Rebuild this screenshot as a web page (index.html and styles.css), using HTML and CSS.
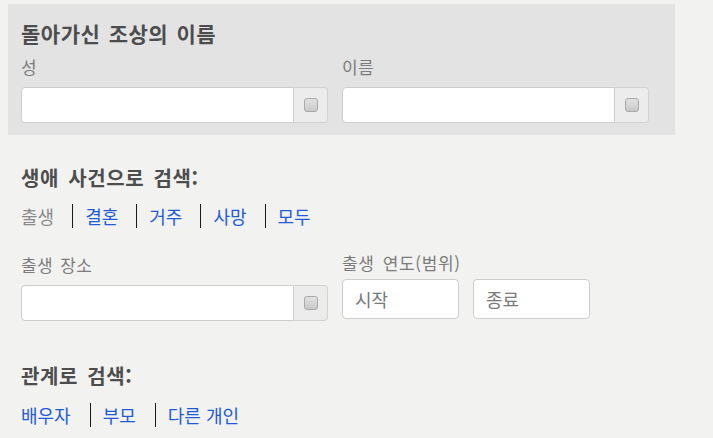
FILE: index.html
```html
<!DOCTYPE html>
<html lang="ko">
<head>
<meta charset="utf-8">
<link rel="stylesheet" href="styles.css">
</head>
<body>
<div class="page">
  <div class="panel">
    <h2 class="heading title">돌아가신 조상의 이름</h2>
    <div class="fields">
      <div class="field">
        <label class="label">성</label>
        <div class="group">
          <div class="input"></div>
          <div class="addon"><span class="check"></span></div>
        </div>
      </div>
      <div class="field">
        <label class="label">이름</label>
        <div class="group">
          <div class="input"></div>
          <div class="addon"><span class="check"></span></div>
        </div>
      </div>
    </div>
  </div>

  <div class="section">
    <h2 class="heading">생애 사건으로 검색:</h2>
    <div class="tabs">
      <span class="tab current">출생</span>
      <span class="tab">결혼</span>
      <span class="tab">거주</span>
      <span class="tab">사망</span>
      <span class="tab">모두</span>
    </div>
    <div class="fields events">
      <div class="field place">
        <label class="label">출생 장소</label>
        <div class="group">
          <div class="input"></div>
          <div class="addon"><span class="check"></span></div>
        </div>
      </div>
      <div class="field years">
        <label class="label wide">출생 연도(범위)</label>
        <div class="range">
          <div class="small-input">시작</div>
          <div class="small-input">종료</div>
        </div>
      </div>
    </div>
  </div>

  <div class="section rel">
    <h2 class="heading">관계로 검색:</h2>
    <div class="tabs">
      <span class="tab">배우자</span>
      <span class="tab">부모</span>
      <span class="tab">다른 개인</span>
    </div>
  </div>
</div>
</body>
</html>
```

FILE: styles.css
```css
html, body {
  margin: 0;
  padding: 0;
  background: #f2f2f1;
}
body {
  font-family: "Noto Sans CJK KR", "Noto Sans", sans-serif;
  color: #4a4a4a;
}
.page {
  width: 667px;
  padding: 4px 0 0 8px;
}
.panel {
  background: #e3e3e3;
  padding: 16px 13px 12px;
}
.heading {
  margin: 0;
  font-size: 20px;
  line-height: 26px;
  font-weight: bold;
  color: #4d4d4d;
  letter-spacing: 0.6px;
  word-spacing: 3px;
}
.heading.title {
  font-size: 21px;
  letter-spacing: 0.5px;
  word-spacing: 2px;
}
.fields {
  display: flex;
  gap: 14px;
}
.label {
  display: block;
  font-size: 17px;
  line-height: 22px;
  color: #7c7c7c;
  margin: 10px 0 9px;
  letter-spacing: 0.4px;
  word-spacing: 2px;
}
.label.wide {
  letter-spacing: 0.6px;
  word-spacing: 3px;
}
.group {
  display: flex;
  width: 307px;
}
.input {
  box-sizing: border-box;
  width: 273px;
  height: 36px;
  background: #fff;
  border: 1px solid #cdcdcd;
  border-radius: 4px 0 0 4px;
}
.addon {
  box-sizing: border-box;
  width: 34px;
  height: 36px;
  background: #ececec;
  border: 1px solid #d2d2d2;
  border-left: none;
  border-radius: 0 4px 4px 0;
  display: flex;
  align-items: center;
  justify-content: center;
}
.check {
  box-sizing: border-box;
  width: 14px;
  height: 14px;
  border: 1px solid #a9a9a9;
  border-radius: 3px;
  background: linear-gradient(#e2e2e2, #c9c9c9);
}
.section {
  padding: 30px 13px 0;
}
.tabs {
  display: flex;
  align-items: center;
  margin-top: 13px;
}
.tab {
  font-size: 18px;
  line-height: 24px;
  color: #1f5bd8;
  padding: 0 18px 0 12px;
  border-left: 1px solid #1a1a1a;
}
.tab:first-child {
  padding-left: 0;
  border-left: none;
}
.tab.current {
  color: #8a8a8a;
}
.events {
  margin-top: 16px;
}
.years .label {
  margin-top: 8px;
  margin-bottom: 5px;
}
.range {
  display: flex;
  gap: 14px;
}
.small-input {
  box-sizing: border-box;
  width: 117px;
  height: 40px;
  background: #fff;
  border: 1px solid #cdcdcd;
  border-radius: 4px;
  font-size: 18px;
  line-height: 38px;
  color: #7a7a7a;
  padding-left: 12px;
}
.rel {
  padding-top: 42px;
}
.rel .tabs {
  margin-top: 14px;
}
.rel .tab {
  padding-right: 19px;
}
```
